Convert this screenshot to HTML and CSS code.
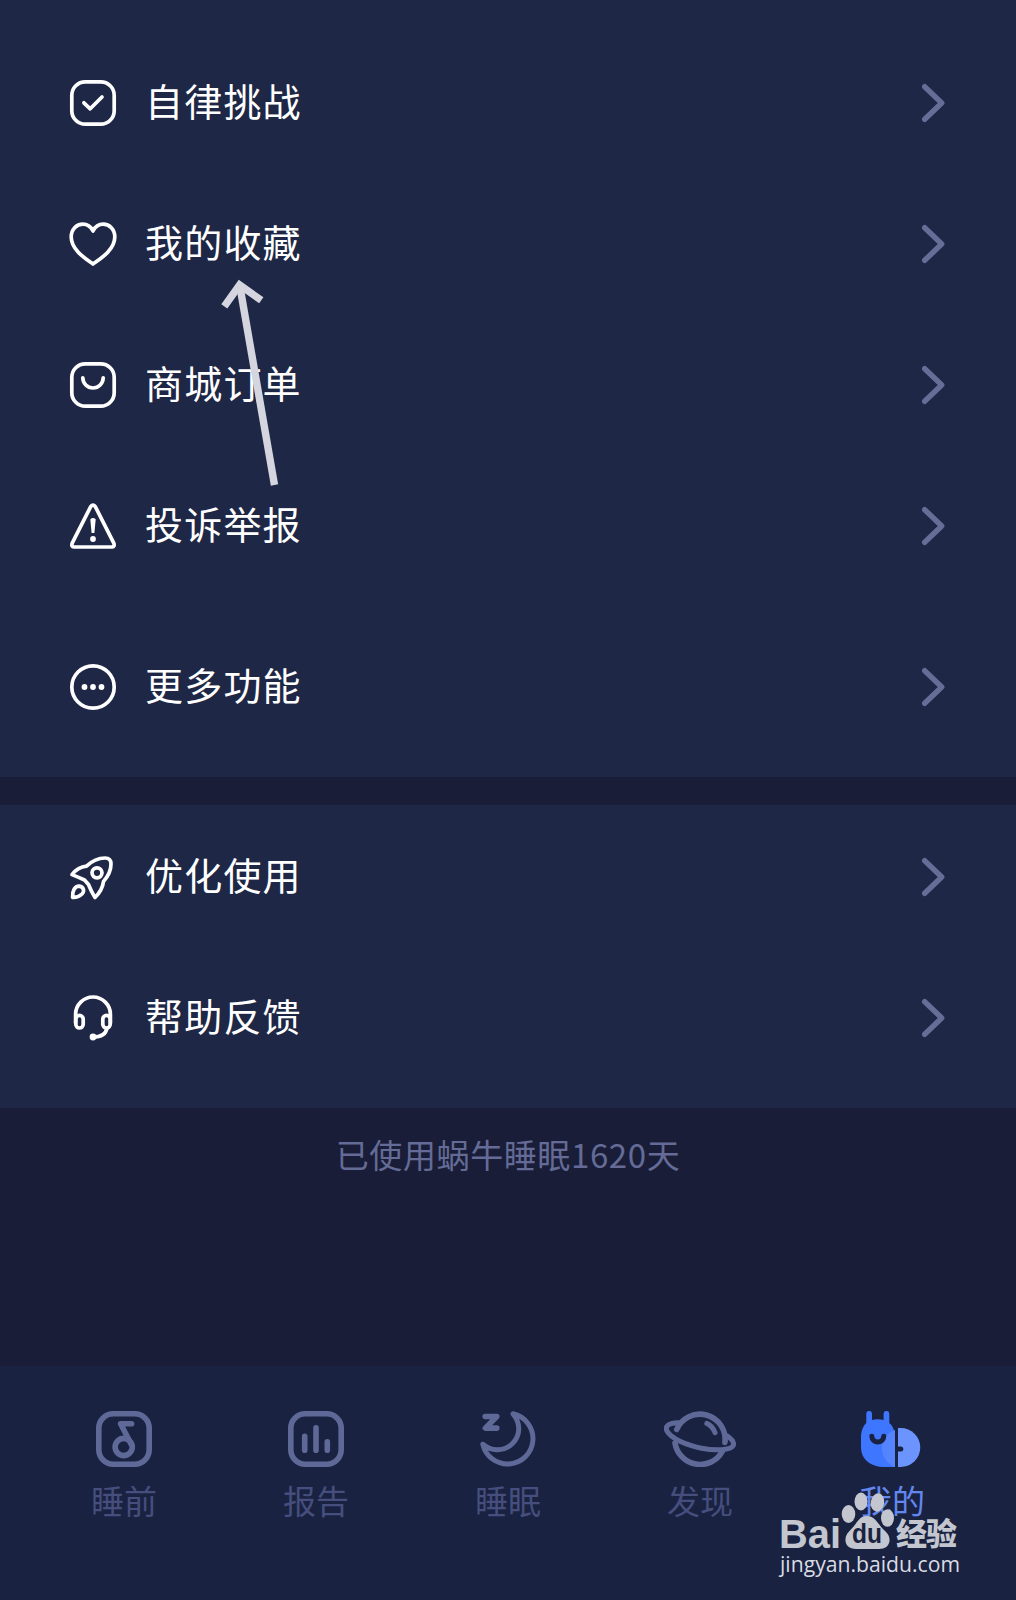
FILE: index.html
```html
<!DOCTYPE html>
<html lang="zh-CN">
  <head>
    <meta charset="UTF-8" />
    <meta name="viewport" content="width=device-width, initial-scale=1.0" />
    <title>我的</title>
    <link rel="stylesheet" href="styles.css">
  </head>
  <body>
    <div class="page">
      <div class="menu">
        <a class="row">
          <svg class="icon" viewBox="0 0 46 46"><rect x="1.8" y="1.8" width="42.4" height="42.4" rx="13.5" /><path d="M13.9 22.8L20.2 28.8L32 17" /></svg>
          <span>自律挑战</span>
          <svg class="arrow" viewBox="0 0 24 40"><path d="M3.7 3.7L20.7 20L3.7 36.3" /></svg>
        </a>
        <a class="row">
          <svg class="icon" viewBox="0 0 46 46"><path d="M23 43C16 38 1.2 29 1.2 16C1.2 8.5 6.5 3.2 12.8 3.2C17.5 3.2 21 6 23 10C25 6 28.5 3.2 33.2 3.2C39.5 3.2 44.8 8.5 44.8 16C44.8 29 30 38 23 43Z" /></svg>
          <span>我的收藏</span>
          <svg class="arrow" viewBox="0 0 24 40"><path d="M3.7 3.7L20.7 20L3.7 36.3" /></svg>
        </a>
        <a class="row">
          <svg class="icon" viewBox="0 0 46 46"><rect x="1.8" y="1.8" width="42.4" height="42.4" rx="13.5" /><path d="M12.8 15.8a10.2 10.2 0 0 0 20.4 0" /></svg>
          <span>商城订单</span>
          <svg class="arrow" viewBox="0 0 24 40"><path d="M3.7 3.7L20.7 20L3.7 36.3" /></svg>
        </a>
        <a class="row">
          <svg class="icon" viewBox="0 0 46 46"><path d="M20.7 3.6Q23 .6 25.3 3.6L43.8 40.2Q45 43.6 42 44H4Q1 43.6 2.2 40.2Z" /><path class="solid" d="M20.3 16.2Q23 13.8 25.7 16.2L24.4 30H21.6Z" /><circle class="solid" cx="23" cy="36" r="2.9" /></svg>
          <span>投诉举报</span>
          <svg class="arrow" viewBox="0 0 24 40"><path d="M3.7 3.7L20.7 20L3.7 36.3" /></svg>
        </a>
        <a class="row more">
          <svg class="icon" viewBox="0 0 46 46"><circle cx="23" cy="23" r="21.2" /><circle class="solid" cx="14.5" cy="23" r="2.9" /><circle class="solid" cx="23" cy="23" r="2.9" /><circle class="solid" cx="31.5" cy="23" r="2.9" /></svg>
          <span>更多功能</span>
          <svg class="arrow" viewBox="0 0 24 40"><path d="M3.7 3.7L20.7 20L3.7 36.3" /></svg>
        </a>
      </div>

      <div class="menu second">
        <a class="row">
          <svg class="icon" viewBox="0 0 46 46"><path d="M2 20.6Q8 13 16.5 12.2Q25 4 35 4Q41 4 41 10Q41 19 33.5 27.5Q32.5 36 25 43.5Q21.5 38 18.5 30.5L14.5 26Q8 23 2 20.6Z" /><circle cx="27" cy="18.8" r="5" /><path d="M2.6 43.4C2 37 5 32 9.3 32.2C14.2 33 14.5 37.5 12 40C9 42.8 6 43.6 2.6 43.4Z" /></svg>
          <span>优化使用</span>
          <svg class="arrow" viewBox="0 0 24 40"><path d="M3.7 3.7L20.7 20L3.7 36.3" /></svg>
        </a>
        <a class="row">
          <svg class="icon" viewBox="0 0 46 46"><path d="M5.6 28V19.4a17.4 17.4 0 0 1 34.8 0V28" /><rect x="5.8" y="20.4" width="7.4" height="12.6" rx="3.7" /><rect x="32.8" y="20.4" width="7.4" height="12.6" rx="3.7" /><path d="M36.8 33.5Q35.5 42 23 42" /><circle class="solid" cx="23" cy="42" r="3.4" /></svg>
          <span>帮助反馈</span>
          <svg class="arrow" viewBox="0 0 24 40"><path d="M3.7 3.7L20.7 20L3.7 36.3" /></svg>
        </a>
      </div>

      <p class="days">已使用蜗牛睡眠1620天</p>

      <div class="tabs">
        <a class="tab">
          <svg width="56" height="56" viewBox="0 0 56 56"><rect x="2.8" y="2.8" width="50.4" height="50.4" rx="14.5" /><circle cx="27.7" cy="36" r="8.6" /><path d="M35.6 12.8H24.6L35.6 34" /></svg>
          <span>睡前</span>
        </a>
        <a class="tab">
          <svg width="56" height="56" viewBox="0 0 56 56"><rect x="2.8" y="2.8" width="50.4" height="50.4" rx="14.5" /><path d="M16.7 25.2V39.3M28 16.8V39.3M39.3 30.8V39.3" /></svg>
          <span>报告</span>
        </a>
        <a class="tab">
          <svg width="56" height="56" viewBox="0 0 56 56"><path class="moon" d="M33 2.8A25.4 25.4 0 1 1 2.8 33.2C12 41.5 25 40 32.5 32.5C40 25 41.5 13 33 2.8Z" /><path d="M5.2 5.5H16.8L5.4 17.1H16.8" /></svg>
          <span>睡眠</span>
        </a>
        <a class="tab">
          <svg width="72" height="56" viewBox="0 0 72 56"><path d="M12.7 18.5A25.2 25.2 0 0 1 60.9 31.5M11 32A25.4 25.4 0 0 0 58.2 40.6" /><path class="ring" d="M14.5 11.7C5 11.5 .5 15.5 3 20C7 27.5 22 34 37.5 37.2C52 40 66.5 39.2 69.1 34.8C70.5 32 69 29 63 24.8M42.8 12.4Q48.4 14.8 51 21.6" /></svg>
          <span>发现</span>
        </a>
        <a class="tab active">
          <svg class="snail" width="62" height="56" viewBox="0 0 62 56">
            <path class="body" d="M0 36V26C0 19 3 14 5.3 12V2.8a2.85 2.85 0 0 1 5.7 0V9Q16.5 7.6 22.6 9V2.8a2.85 2.85 0 0 1 5.7 0V12C32 15 34 20 34 26V56H24C9 56 0 48 0 36Z" />
            <path class="overlap" d="M34 19A19.6 19.6 0 0 0 34 56Z" />
            <path class="shell" d="M37 17.1Q38.4 16.9 39.7 16.9A19.5 19.5 0 0 1 39.7 56H37Z" />
            <path class="face" d="M10.8 25.2C11.2 33 22.4 33 22.8 25.2M37 37.9H39.8" />
          </svg>
          <span>我的</span>
        </a>
      </div>

      <svg class="pointer" width="46" height="210" viewBox="220 278 46 210"><path d="M274.5 485L240 287" /><path d="M224.3 306.3L239.6 285L261.3 300.3" /></svg>

      <svg class="watermark" width="190" height="98" viewBox="775 1486 190 98">
        <text class="bai" x="779" y="1548" textLength="62" lengthAdjust="spacingAndGlyphs">Bai</text>
        <ellipse cx="848.5" cy="1514" rx="6.8" ry="9" />
        <ellipse cx="861" cy="1501.5" rx="6.5" ry="9" />
        <ellipse cx="877.5" cy="1502.5" rx="6.7" ry="9.2" transform="rotate(10 877.5 1502.5)" />
        <ellipse cx="887.5" cy="1518" rx="6.5" ry="8.8" />
        <path d="M867 1516C874 1516 877 1522 882 1528C887 1533 890 1535 889.5 1541C889 1546 885 1549 879 1549H856C849 1549 845 1545 845.5 1539C846 1533 850 1531 854 1526C858 1521 860 1516 867 1516Z" />
        <text class="du" x="852" y="1543" textLength="30" lengthAdjust="spacingAndGlyphs">du</text>
        <text class="jy" x="896" y="1545" textLength="61">经验</text>
        <text class="url" x="780" y="1572" textLength="180" lengthAdjust="spacingAndGlyphs">jingyan.baidu.com</text>
      </svg>
    </div>
  </body>
</html>
```
FILE: styles.css
```css
body {
  margin: 0;
  background-color: #191d37;
  font-family: "Noto Sans CJK SC", sans-serif;
}
.page {
  position: relative;
  display: flex;
  flex-direction: column;
  height: 1600px;
  overflow: hidden;
}
.menu {
  padding: 32px 71px 20px 70px;
  background-color: #1e2745;
}
.menu.second {
  margin-top: 28px;
  padding-top: 1px;
  padding-bottom: 20px;
}
.row {
  display: flex;
  align-items: center;
  height: 141px;
  color: #fff;
  font-size: 38px;
  letter-spacing: 1.2px;
}
.row.more {
  margin-top: 20px;
}
.row span {
  flex: 1;
  margin-left: 29px;
  padding-bottom: 5px;
  line-height: 50px;
}
svg {
  fill: none;
  stroke-linecap: round;
  stroke-linejoin: round;
}
.icon {
  width: 46px;
  height: 46px;
  overflow: visible;
  stroke: #fff;
  stroke-width: 3.7;
}
.icon .solid {
  fill: #fff;
  stroke: none;
}
.arrow {
  width: 24px;
  height: 40px;
  stroke: #666e98;
  stroke-width: 5.4;
}
.days {
  margin: 21px 0 0;
  color: #646b96;
  font-size: 33px;
  line-height: 50px;
  letter-spacing: 0.6px;
  text-align: center;
}

/* bottom tab bar */
.tabs {
  display: flex;
  height: 189px;
  margin-top: auto;
  padding: 45px 28px 0;
  background-color: #1a2241;
}
.tab {
  display: flex;
  flex: 1;
  flex-direction: column;
  align-items: center;
  gap: 13px;
  color: #454e7c;
  font-size: 33px;
  line-height: 40px;
}
.tab svg {
  stroke: #5f6997;
  stroke-width: 5.6;
}
.tab .moon,
.tab .ring {
  stroke-width: 5;
}
.tab.active {
  color: #6287ef;
}
.tab .snail {
  stroke: none;
}
.snail .body {
  fill: #3f76ff;
}
.snail .overlap {
  fill: #5584ff;
}
.snail .shell {
  fill: #6c94ff;
}
.snail .face {
  stroke: #1a2241;
  stroke-width: 5;
}

/* hand drawn arrow and site mark lie over the page */
.pointer {
  position: absolute;
  left: 220px;
  top: 278px;
  overflow: visible;
  stroke: #d5d5df;
  stroke-width: 7.4;
  stroke-linecap: butt;
  stroke-linejoin: miter;
}
.watermark {
  position: absolute;
  left: 775px;
  top: 1486px;
  fill: #c3c6cf;
}
.bai {
  font: bold 41px "Liberation Sans", sans-serif;
}
.du {
  fill: #1a2241;
  font: bold 27px "Liberation Sans", sans-serif;
}
.jy {
  font: 900 31px "Noto Sans CJK SC", sans-serif;
}
.url {
  fill: #d9dbe2;
  font: 22px "Open Sans", sans-serif;
}
```
